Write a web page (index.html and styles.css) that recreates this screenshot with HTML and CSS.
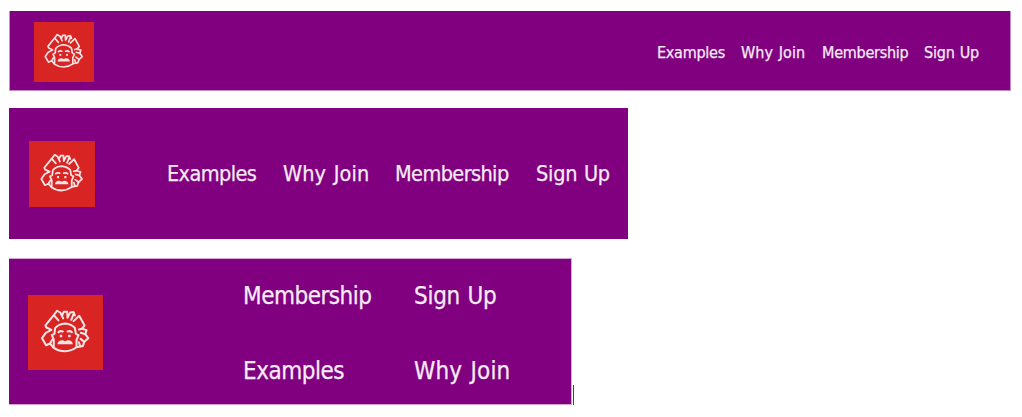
FILE: index.html
```html
<!DOCTYPE html>
<html lang="en">
<head>
<meta charset="utf-8">
<title>Responsive navigation</title>
<link rel="stylesheet" href="styles.css">
</head>
<body>
<svg class="defs" width="0" height="0" aria-hidden="true">
  <symbol id="logo" viewBox="0 0 224 224">
    <rect width="224" height="224" fill="#d92424"/>
    <g fill="none" stroke="#f5e6e6" stroke-width="6" stroke-linejoin="round" stroke-linecap="round">
      <path d="M91 76 77 60M77 60 52 91 55 97 70 104 53 113 42 129 54 150 66 145 76 157Q92 168 111 168Q130 167 145 156L164 152 168 140 180 129 171 117 175 105 161 101 169 91 153 62 136 78M77 60 87 47 97 53 105 70M103 59 107 50 117 50 118 68M119 66 126 52 136 51 140 61M136 57 129 74"/>
      <path d="M161 101 152 103M171 117 158 113M168 140 157 131M66 145 72 134M156 153 152 141"/>
      <path d="M77 154V133L71 120 79 116 81 99Q92 86 111 85Q130 87 140 98L143 116 151 120 145 134 145 154"/>
      <path d="M91 111Q96 106 104 109M118 109Q126 106 131 111"/>
    </g>
    <path fill="#f5e6e6" d="M88 147Q90 134 104 135L111 138 118 135Q132 134 134 147ZM95 119h7v7h-7zM120 119h7v7h-7z"/>
  </symbol>
</svg>
<header class="bar wide">
  <svg class="logo"><use href="#logo"/></svg>
  <nav class="links"><a class="ex">Examples</a><a class="why">Why Join</a><a class="mem">Membership</a><a class="sign">Sign Up</a></nav>
</header>
<header class="bar medium">
  <svg class="logo"><use href="#logo"/></svg>
  <nav class="links"><a class="ex">Examples</a><a class="why">Why Join</a><a class="mem">Membership</a><a class="sign">Sign Up</a></nav>
</header>
<div class="last-row">
  <header class="bar narrow">
    <svg class="logo"><use href="#logo"/></svg>
    <nav class="links"><a class="mem">Membership</a><a class="sign">Sign Up</a><a class="ex">Examples</a><a class="why">Why Join</a></nav>
  </header>
  <span class="caret"></span>
</div>
</body>
</html>
```
FILE: styles.css
```css
* { box-sizing: border-box; }
body {
  margin: 0;
  padding: 11px 0 0 9px;
  background: #fff;
  font-family: Tahoma, "DejaVu Sans Condensed", "DejaVu Sans", sans-serif;
  font-stretch: condensed;
}
.defs { display: block; }
.bar {
  display: flex;
  align-items: center;
  background: #800080;
  color: #f6ebf6;
}
.logo { display: block; flex: none; }
.links { -webkit-text-stroke: 0.25px #f6ebf6; }
.links a { white-space: nowrap; }
.links .why { letter-spacing: 0.005em; word-spacing: 0.06em; }
.links .sign { letter-spacing: -0.012em; word-spacing: 0.04em; }
.wide { width: 1002px; height: 80px; padding-left: 24px; border: 1px solid #c78bc7; border-width: 0 1px 1px; }
.wide .logo { width: 60px; height: 60px; margin-top: 3px; }
.wide .links {
  display: grid;
  grid-template-columns: 84px 81px 102px 60px;
  margin-left: 563px;
  margin-top: 3px;
  font-size: 16px;
  letter-spacing: -0.25px;
}
.medium { width: 619px; height: 131px; margin-top: 17px; padding-left: 20px; }
.medium .logo { width: 66px; height: 66px; }
.medium .links {
  display: grid;
  grid-template-columns: 116px 112px 141px 80px;
  margin-left: 72px;
  font-size: 21.5px;
  letter-spacing: -0.6px;
}
.last-row { display: flex; align-items: flex-end; margin-top: 19px; }
.narrow { width: 563px; height: 147px; padding-left: 19px; border: 1px solid #d3a5d3; border-width: 1px 1px 1px 0; }
.narrow .logo { width: 75px; height: 75px; margin-top: 1px; }
.narrow .links {
  display: grid;
  grid-template-columns: 171px 110px;
  grid-template-rows: 75px 75px;
  align-items: center;
  margin: 3px 0 0 140px;
  font-size: 24px;
  letter-spacing: -0.5px;
}
.caret { width: 1px; height: 21px; margin: 0 0 -1px 1px; background: #444; }
```
